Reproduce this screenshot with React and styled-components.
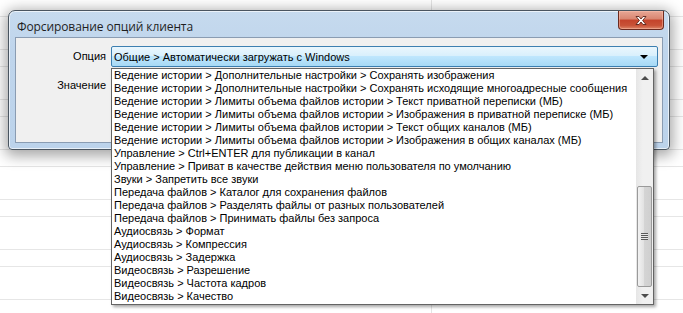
import React from "react";
import styled, { createGlobalStyle } from "styled-components";

const GlobalStyle = createGlobalStyle`
	html, body {
		margin: 0;
		padding: 0;
		background: #fff;
	}
	body {
		width: 683px;
		height: 313px;
		overflow: hidden;
		font-family: "Liberation Sans", Arial, sans-serif;
	}
`;

const Desktop = styled.div`
	position: relative;
	width: 683px;
	height: 313px;
	overflow: hidden;
	background-color: #fff;
	background-image:
		linear-gradient(to right, transparent 431px, #e4e4e4 431px, #e4e4e4 432px, transparent 432px),
		repeating-linear-gradient(to bottom, transparent 0, transparent 16px, #e6e6e6 16px, #e6e6e6 16.67px);
	padding: 10px 0 0 8px;
	box-sizing: border-box;
`;

const Window = styled.div`
	position: relative;
	width: 662px;
	height: 140px;
	box-sizing: border-box;
	border: 1px solid #4a5560;
	border-radius: 7px 7px 4px 4px;
	background: linear-gradient(to bottom, #c6daee 0%, #bfd5ec 30%, #bcd3eb 100%);
	box-shadow: 0 3px 14px 3px rgba(0, 0, 0, 0.35), inset 0 0 0 1px rgba(255, 255, 255, 0.65);
	padding: 0 6px 6px 6px;
	display: flex;
	flex-direction: column;
`;

const TitleBar = styled.div`
	height: 26px;
	display: flex;
	align-items: flex-start;
	justify-content: space-between;
`;

const Title = styled.div`
	font-family: "Open Sans", "Noto Sans", sans-serif;
	font-size: 12px;
	color: #1e1e1e;
	padding: 7px 0 0 2px;
	letter-spacing: -0.1px;
`;

const CloseButton = styled.div`
	width: 46px;
	height: 19px;
	margin-right: -1px;
	box-sizing: border-box;
	border: 1px solid #6b2a1f;
	border-top: none;
	border-radius: 0 0 4px 4px;
	background: linear-gradient(to bottom, #e8a796 0%, #d98570 45%, #c4432b 50%, #c85237 80%, #dd8568 100%);
	box-shadow: inset 0 0 0 1px rgba(255, 200, 180, 0.45);
	display: flex;
	align-items: center;
	justify-content: center;
`;

const Client = styled.div`
	flex: 1;
	box-sizing: border-box;
	border: 1px solid #8a9cb2;
	background: #f0f0f0;
	padding: 8px 4px 0 0;
	display: grid;
	grid-template-columns: 88px 1fr;
	grid-auto-rows: 21px;
	row-gap: 8px;
	column-gap: 7px;
	position: relative;
`;

const Label = styled.div`
	font-size: 11px;
	color: #000;
	text-align: right;
	line-height: 21px;
	padding-right: 1px;
	margin-right: -3px;
`;

const Combo = styled.div`
	box-sizing: border-box;
	height: 21px;
	border: 1px solid #3c7fb1;
	border-radius: 2px;
	background: linear-gradient(to bottom, #eaf6fd 0%, #d9f0fc 45%, #bee6fd 50%, #a7d9f5 100%);
	display: flex;
	align-items: center;
	justify-content: space-between;
	padding: 0 9px 0 2px;
	font-size: 11px;
	color: #000;
`;

const Arrow = styled.div`
	width: 0;
	height: 0;
	border-left: 4px solid transparent;
	border-right: 4px solid transparent;
	border-top: 4px solid ${({ color }) => color || "#000"};
`;

const UpArrow = styled.div`
	width: 0;
	height: 0;
	border-left: 4px solid transparent;
	border-right: 4px solid transparent;
	border-bottom: 4px solid #4d4d4d;
`;

const List = styled.div`
	position: absolute;
	left: 95px;
	top: 30px;
	width: 543px;
	height: 237px;
	box-sizing: border-box;
	border: 1px solid #646464;
	background: #fff;
	box-shadow: 2px 2px 3px rgba(0, 0, 0, 0.35);
	display: flex;
	z-index: 5;
`;

const Items = styled.ul`
	flex: 1;
	margin: 0;
	padding: 0 0 0 2px;
	list-style: none;
	overflow: hidden;
`;

const Item = styled.li`
	height: 13px;
	line-height: 13px;
	font-size: 11px;
	color: #000;
	white-space: nowrap;
`;

const Scrollbar = styled.div`
	width: 17px;
	background: linear-gradient(to right, #e6e6e6, #f0f0f0 40%, #f0f0f0);
	display: flex;
	flex-direction: column;
	align-items: center;
`;

const ScrollBtn = styled.div`
	height: 17px;
	width: 100%;
	display: flex;
	align-items: center;
	justify-content: center;
`;

const Track = styled.div`
	flex: 1;
	width: 100%;
	display: flex;
	flex-direction: column;
	justify-content: flex-end;
`;

const Thumb = styled.div`
	height: 101px;
	margin: 0 1px 0 1px;
	box-sizing: border-box;
	border: 1px solid #9a9a9a;
	border-radius: 2px;
	background: linear-gradient(to right, #f2f2f2 0%, #e2e2e2 45%, #d4d4d4 50%, #cfcfcf 100%);
	display: flex;
	align-items: center;
	justify-content: center;
`;

const Grip = styled.div`
	width: 7px;
	height: 7px;
	background: repeating-linear-gradient(to bottom, #5a5a5a 0, #5a5a5a 1px, #e8e8e8 1px, #e8e8e8 2px);
`;

const items = [
	"Ведение истории > Дополнительные настройки > Сохранять изображения",
	"Ведение истории > Дополнительные настройки > Сохранять исходящие многоадресные сообщения",
	"Ведение истории > Лимиты объема файлов истории > Текст приватной переписки (МБ)",
	"Ведение истории > Лимиты объема файлов истории > Изображения в приватной переписке (МБ)",
	"Ведение истории > Лимиты объема файлов истории > Текст общих каналов (МБ)",
	"Ведение истории > Лимиты объема файлов истории > Изображения в общих каналах (МБ)",
	"Управление > Ctrl+ENTER для публикации в канал",
	"Управление > Приват в качестве действия меню пользователя по умолчанию",
	"Звуки > Запретить все звуки",
	"Передача файлов > Каталог для сохранения файлов",
	"Передача файлов > Разделять файлы от разных пользователей",
	"Передача файлов > Принимать файлы без запроса",
	"Аудиосвязь > Формат",
	"Аудиосвязь > Компрессия",
	"Аудиосвязь > Задержка",
	"Видеосвязь > Разрешение",
	"Видеосвязь > Частота кадров",
	"Видеосвязь > Качество",
];

const CloseIcon = () => (
	<svg width="14" height="11" viewBox="0 0 14 11">
		<path
			d="M2 1.5 L5 1.5 L7 4 L9 1.5 L12 1.5 L8.6 5.5 L12 9.5 L9 9.5 L7 7 L5 9.5 L2 9.5 L5.4 5.5 Z"
			fill="#fff"
			stroke="#5a2218"
			strokeWidth="0.9"
			strokeLinejoin="round"
		/>
	</svg>
);

export default function App() {
	return (
		<>
			<GlobalStyle />
			<Desktop>
				<Window>
					<TitleBar>
						<Title>Форсирование опций клиента</Title>
						<CloseButton>
							<CloseIcon />
						</CloseButton>
					</TitleBar>
					<Client>
						<Label>Опция</Label>
						<Combo>
							<span>Общие &gt; Автоматически загружать с Windows</span>
							<Arrow />
						</Combo>
						<Label>Значение</Label>
						<div />
						<List>
							<Items>
								{items.map((text) => (
									<Item key={text}>{text}</Item>
								))}
							</Items>
							<Scrollbar>
								<ScrollBtn>
									<UpArrow />
								</ScrollBtn>
								<Track>
									<Thumb>
										<Grip />
									</Thumb>
								</Track>
								<ScrollBtn>
									<Arrow color="#4d4d4d" />
								</ScrollBtn>
							</Scrollbar>
						</List>
					</Client>
				</Window>
			</Desktop>
		</>
	);
}
